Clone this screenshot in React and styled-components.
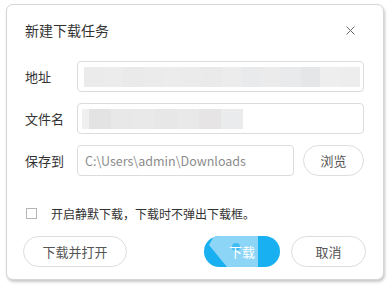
import React from 'react';
import styled, { createGlobalStyle } from 'styled-components';

const GlobalStyle = createGlobalStyle`
  html, body {
    margin: 0;
    padding: 0;
    background: #ffffff;
  }
  body {
    font-family: "Noto Sans CJK SC", "Noto Sans", "Liberation Sans", sans-serif;
    color: #333333;
  }
`;

const urlBlocks = [
  '#ebebeb', '#ececec', '#eaeaea', '#ebebec', '#ececec', '#ebebeb',
  '#eaeaea', '#ececec', '#e9eaeb', '#ebebeb', '#e9eaeb', '#e5e6e8',
  '#eeeeee', '#ededed',
];
const nameBlocks = ['#e3e3e3', '#e8e8e8', '#e9e9ea', '#e8e7e7', '#e9e9ea', '#e6e4e4', '#eaebec'];

const Dialog = () => (
  <Frame>
    <Header>
      <Title>新建下载任务</Title>
      <CloseButton aria-label="关闭">
        <svg width="11" height="11" viewBox="0 0 11 11">
          <path d="M1.5 1.5 L9.5 9.5 M9.5 1.5 L1.5 9.5" stroke="#666" strokeWidth="1" />
        </svg>
      </CloseButton>
    </Header>

    <Form>
      <Row>
        <Label>地址</Label>
        <Field>
          <Mosaic $inset="6px">
            {urlBlocks.map((c, i) => (
              <Block key={i} $color={c} $w={19.7} />
            ))}
          </Mosaic>
        </Field>
      </Row>
      <Row>
        <Label>文件名</Label>
        <Field>
          <Mosaic $inset="4px">
            <Block $color="#f1f0f0" $w={7} />
            {nameBlocks.map((c, i) => (
              <Block key={i} $color={c} $w={22} />
            ))}
          </Mosaic>
        </Field>
      </Row>
      <Row>
        <Label>保存到</Label>
        <Field $grow>
          <PathText>C:\Users\admin\Downloads</PathText>
        </Field>
        <PillButton $w={61}>浏览</PillButton>
      </Row>
    </Form>

    <CheckRow>
      <CheckBox />
      <CheckText>开启静默下载，下载时不弹出下载框。</CheckText>
    </CheckRow>

    <Footer>
      <PillButton $w={104}>下载并打开</PillButton>
      <RightGroup>
        <PrimaryButton>
          <Ripple width="76" height="31" viewBox="0 0 76 31">
            <polygon points="10,0 54,0 54,31 23,31 5,9" fill="#8dd5f6" />
            <circle cx="32" cy="11" r="4" fill="#3fbdf2" />
          </Ripple>
          <ButtonLabel>下载</ButtonLabel>
        </PrimaryButton>
        <PillButton $w={75}>取消</PillButton>
      </RightGroup>
    </Footer>
  </Frame>
);

export default function App() {
  return (
    <>
      <GlobalStyle />
      <Page>
        <Dialog />
      </Page>
    </>
  );
}

const Page = styled.div`
  padding: 4px 6px 0 6px;
  width: 390px;
  height: 290px;
  box-sizing: border-box;
`;

const Frame = styled.div`
  box-sizing: border-box;
  width: 378px;
  height: 276px;
  border: 1px solid #d6d6d6;
  border-radius: 7px;
  background: #ffffff;
  box-shadow: 1px 2px 3px rgba(0, 0, 0, 0.22);
  padding: 15px 19px 0 18px;
  display: flex;
  flex-direction: column;
`;

const Header = styled.div`
  display: flex;
  align-items: center;
  justify-content: space-between;
  height: 20px;
`;

const Title = styled.h1`
  margin: 0;
  font-size: 14px;
  font-weight: normal;
  color: #333333;
  line-height: 20px;
`;

const CloseButton = styled.button`
  border: none;
  background: none;
  padding: 0;
  margin-right: 8px;
  width: 11px;
  height: 11px;
  display: flex;
`;

const Form = styled.div`
  display: flex;
  flex-direction: column;
  gap: 11px;
  margin-top: 21px;
`;

const Row = styled.div`
  display: flex;
  align-items: center;
  height: 31px;
  gap: 9px;
`;

const Label = styled.span`
  width: 43px;
  flex: none;
  font-size: 13px;
  color: #333333;
`;

const Field = styled.div`
  box-sizing: border-box;
  height: 31px;
  flex: 1;
  border: 1px solid #dcdcdc;
  border-radius: 4px;
  display: flex;
  align-items: center;
  overflow: hidden;
`;

const Mosaic = styled.div`
  display: flex;
  height: 20px;
  margin-left: ${(p) => p.$inset};
`;

const Block = styled.div`
  width: ${(p) => p.$w}px;
  height: 100%;
  background: ${(p) => p.$color};
`;

const PathText = styled.span`
  font-size: 12.5px;
  color: #8c8c8c;
  padding-left: 7px;
  white-space: nowrap;
`;

const PillButton = styled.button`
  box-sizing: border-box;
  flex: none;
  width: ${(p) => p.$w}px;
  height: 31px;
  border: 1px solid #dddddd;
  border-radius: 16px;
  background: #ffffff;
  font-family: inherit;
  font-size: 13px;
  color: #555555;
  padding: 0;
`;

const CheckRow = styled.div`
  display: flex;
  align-items: center;
  gap: 14px;
  margin-top: 30px;
  margin-left: 1px;
  height: 14px;
`;

const CheckBox = styled.span`
  box-sizing: border-box;
  width: 11px;
  height: 11px;
  border: 1px solid #b5b5b5;
  background: #ffffff;
`;

const CheckText = styled.span`
  font-size: 12px;
  color: #333333;
`;

const Footer = styled.div`
  display: flex;
  justify-content: space-between;
  align-items: center;
  margin-top: 16px;
  margin-left: -2px;
  margin-right: -2px;
`;

const RightGroup = styled.div`
  display: flex;
  gap: 11px;
`;

const PrimaryButton = styled.button`
  position: relative;
  box-sizing: border-box;
  width: 76px;
  height: 31px;
  border: none;
  border-radius: 16px;
  background: #18b0f0;
  padding: 0;
  overflow: hidden;
  font-family: inherit;
`;

const Ripple = styled.svg`
  position: absolute;
  left: 0;
  top: 0;
`;

const ButtonLabel = styled.span`
  position: relative;
  font-size: 13px;
  color: #ffffff;
`;
